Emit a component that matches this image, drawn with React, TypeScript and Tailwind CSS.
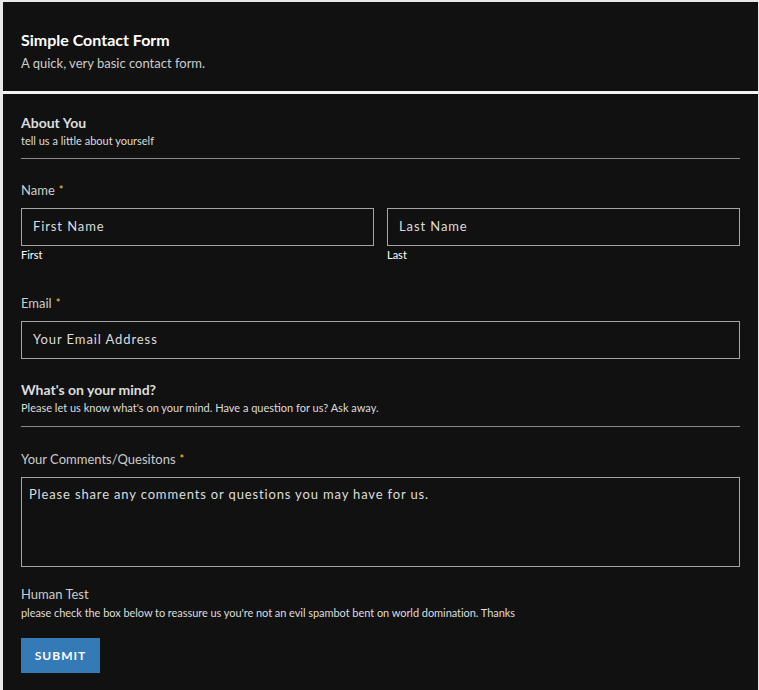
export default function App() {
  const font = "font-['Lato','Noto_Sans',sans-serif]"
  const inputFont = "font-['Lato','Open_Sans',sans-serif]"
  const Req = () => <sup className="text-[#f5d33b] text-[11px] ml-1 relative -top-[1px]">*</sup>

  return (
    <div className={`min-h-[690px] bg-[#e9e9e9] pt-[2px] pl-[3px] pr-[1px] ${font}`}>
      <div className="bg-[#111111] h-[89px] px-[18px] pt-[28px]">
        <h1 className="text-white text-[16px] font-bold leading-5">Simple Contact Form</h1>
        <p className="text-[#cccccc] text-[13px] mt-[3px] leading-5">A quick, very basic contact form.</p>
      </div>
      <div className="bg-[#f4f4f4] h-[3px]" />
      <div className="bg-[#111111] pl-[18px] pr-[18px] pt-[20px] pb-[16px] min-h-[596px]">
        <div className="border-b border-[#8a8a8a] pb-[10px]">
          <h2 className="text-[#dddddd] text-[14px] font-bold leading-[18px]">About You</h2>
          <p className="text-[#dddddd] text-[11px] leading-[15px] mt-[1px]">tell us a little about yourself</p>
        </div>

        <label className="block text-[#cccccc] text-[13px] leading-4 mt-[23px]">
          Name
          <Req />
        </label>
        <div className="flex gap-[13px] mt-[10px]">
          <div className="flex-1">
            <div className={`h-[38px] border border-[#a5a5a5] flex items-center px-[11px] text-[#dddddd] text-[13px] tracking-[0.9px] ${inputFont}`}>
              First Name
            </div>
            <p className="text-white text-[11px] leading-4 mt-[1px]">First</p>
          </div>
          <div className="flex-1">
            <div className={`h-[38px] border border-[#a5a5a5] flex items-center px-[11px] text-[#dddddd] text-[13px] tracking-[0.9px] ${inputFont}`}>
              Last Name
            </div>
            <p className="text-white text-[11px] leading-4 mt-[1px]">Last</p>
          </div>
        </div>

        <label className="block text-[#cccccc] text-[13px] leading-4 mt-[32px]">
          Email
          <Req />
        </label>
        <div className={`h-[38px] border border-[#a5a5a5] flex items-center px-[11px] mt-[10px] text-[#dddddd] text-[13px] tracking-[0.9px] ${inputFont}`}>
          Your Email Address
        </div>

        <div className="border-b border-[#8a8a8a] pb-[11px] mt-[22px]">
          <h2 className="text-[#dddddd] text-[14px] font-bold leading-[18px]">What's on your mind?</h2>
          <p className="text-[#dddddd] text-[11px] leading-[15px] mt-[1px]">
            Please let us know what's on your mind. Have a question for us? Ask away.
          </p>
        </div>

        <label className="block text-[#cccccc] text-[13px] leading-4 mt-[24px]">
          Your Comments/Quesitons
          <Req />
        </label>
        <div className={`h-[90px] border border-[#a5a5a5] px-[7px] pt-[7px] mt-[10px] text-[#dddddd] text-[13px] tracking-[0.85px] ${inputFont}`}>
          Please share any comments or questions you may have for us.
        </div>

        <p className="text-[#cccccc] text-[13px] leading-4 mt-[19px]">Human Test</p>
        <p className="text-[#dddddd] text-[11px] leading-[15px] mt-[3px] tracking-[-0.05px]">
          please check the box below to reassure us you're not an evil spambot bent on world domination. Thanks
        </p>

        <button className="mt-[18px] bg-[#337ab7] text-white text-[12px] font-bold tracking-[1px] h-[35px] w-[79px]">
          SUBMIT
        </button>
      </div>
    </div>
  )
}
